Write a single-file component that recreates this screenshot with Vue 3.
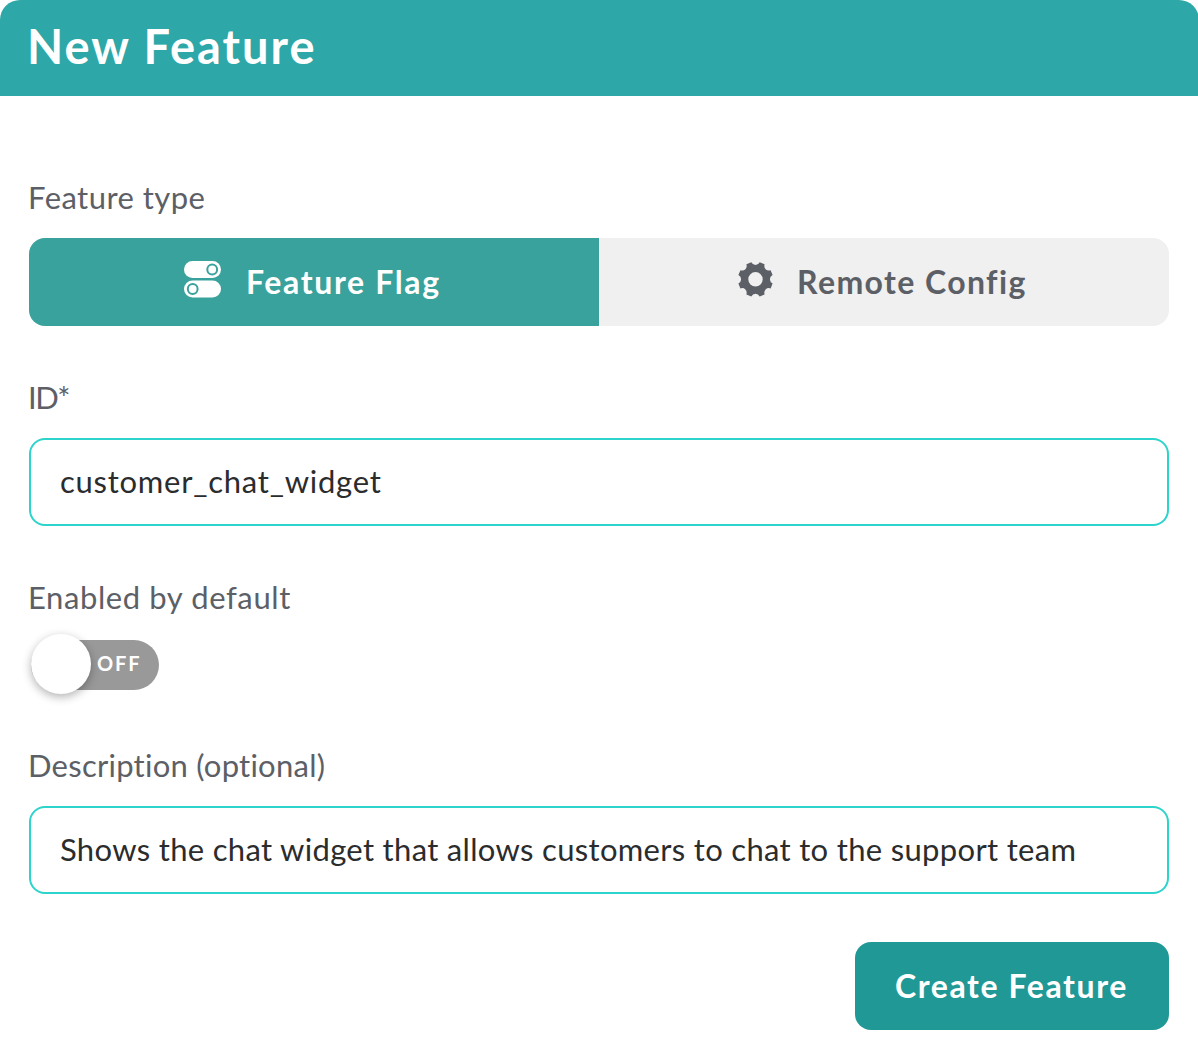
<script setup>
import { ref } from 'vue'

const featureType = ref('flag')
const featureId = ref('customer_chat_widget')
const description = ref('Shows the chat widget that allows customers to chat to the support team')
const enabled = ref(false)
</script>

<template>
  <section class="dialog">
    <header class="head"><h1>New Feature</h1></header>
    <form class="body" @submit.prevent>
      <div class="field">
        <div class="label">Feature type</div>
        <div class="tabs">
          <button type="button" class="tab" :class="{ active: featureType === 'flag' }" @click="featureType = 'flag'">
            <svg class="icon-flag" width="38" height="38" viewBox="0 0 38 38">
              <rect x="1" y="1" width="37" height="17" rx="8.5" fill="currentColor" />
              <circle cx="29.2" cy="9.5" r="4.9" fill="none" stroke="#39a29c" stroke-width="2" />
              <rect x="1" y="20.4" width="37" height="17" rx="8.5" fill="currentColor" />
              <circle cx="9.7" cy="29" r="4.9" fill="none" stroke="#39a29c" stroke-width="2" />
            </svg>
            <span class="t-flag">Feature Flag</span>
          </button>
          <button type="button" class="tab" :class="{ active: featureType === 'config' }" @click="featureType = 'config'">
            <svg class="icon-gear" width="36" height="36" viewBox="-18.5 -18.3 36 36">
              <path
                fill="currentColor"
                fill-rule="evenodd"
                d="M-4.2 -17.1 Q-2.8 -14.4 0 -14.4 Q2.8 -14.4 4.2 -17.1 L9.1 -15.1 Q8.2 -12.1 10.1 -10.1 Q12.1 -8.2 15.1 -9.1 L17.1 -4.2 Q14.4 -2.8 14.4 0 Q14.4 2.8 17.1 4.2 L15.1 9.1 Q12.1 8.2 10.1 10.1 Q8.2 12.1 9.1 15.1 L4.2 17.1 Q2.8 14.4 0 14.4 Q-2.8 14.4 -4.2 17.1 L-9.1 15.1 Q-8.2 12.1 -10.1 10.1 Q-12.1 8.2 -15.1 9.1 L-17.1 4.2 Q-14.4 2.8 -14.4 0 Q-14.4 -2.8 -17.1 -4.2 L-15.1 -9.1 Q-12.1 -8.2 -10.1 -10.1 Q-8.2 -12.1 -9.1 -15.1 Z M7.2 0 A7.2 7.2 0 1 0 -7.2 0 A7.2 7.2 0 1 0 7.2 0 Z"
              />
            </svg>
            <span class="t-config">Remote Config</span>
          </button>
        </div>
      </div>
      <div class="field">
        <div class="label l-id">ID*</div>
        <div class="input v-id">{{ featureId }}</div>
      </div>
      <div class="field">
        <div class="label l-enabled">Enabled by default</div>
        <div class="switch" role="switch" :aria-checked="enabled" @click="enabled = !enabled">
          <span class="track">{{ enabled ? 'ON' : 'OFF' }}</span>
          <span class="knob"></span>
        </div>
      </div>
      <div class="field">
        <div class="label l-desc">Description (optional)</div>
        <div class="input v-desc">{{ description }}</div>
      </div>
      <button type="submit" class="submit">Create Feature</button>
    </form>
  </section>
</template>

<style>
body {
  margin: 0;
  background: #fff;
}
</style>

<style scoped>
.dialog,
.dialog * {
  box-sizing: border-box;
}
.dialog {
  width: 1199px;
  height: 1060px;
  margin-right: -1px;
  overflow: hidden;
  background: #fff;
  font-family: Lato, "Liberation Sans", sans-serif;
  font-size: 31px;
  color: #2b2c2d;
  white-space: nowrap;
}
.head {
  height: 96px;
  padding: 0 29px 4px 27px;
  display: flex;
  align-items: center;
  background: #2da7a7;
  color: #fff;
  border-radius: 20px 20px 0 0;
}
h1 {
  margin: 0;
  font-size: 47px;
  line-height: 56px;
  font-weight: 700;
  letter-spacing: 2px;
}
.body {
  padding: 80px 30px 0 29px;
  display: flex;
  flex-direction: column;
  gap: 50px;
}
.field {
  display: flex;
  flex-direction: column;
  gap: 22px;
}
.label {
  height: 40px;
  line-height: 43px;
  margin-left: -1px;
  color: #5c6066;
  letter-spacing: 0.45px;
}
.l-id {
  letter-spacing: -1.5px;
}
.l-enabled {
  letter-spacing: 0.6px;
}
.l-desc {
  letter-spacing: 0.25px;
}
.tabs {
  height: 88px;
  display: flex;
  border-radius: 16px;
  overflow: hidden;
  background: #f0f0f0;
}
button {
  border: 0;
  margin: 0;
  font-family: inherit;
  font-size: 32px;
  line-height: 38px;
  font-weight: 700;
  letter-spacing: 1.5px;
  cursor: pointer;
}
.tab {
  flex: 1;
  display: flex;
  align-items: center;
  padding: 0;
  background: transparent;
  color: #5c6066;
}
.tab.active {
  background: #39a29c;
  color: #fff;
}
.icon-flag {
  margin: 0 25px 6px 154px;
}
.icon-gear {
  margin: 0 24px 6px 138px;
}
.t-flag,
.t-config {
  padding-bottom: 1px;
}
.t-flag {
  letter-spacing: 1.65px;
}
.t-config {
  letter-spacing: 1.4px;
}
.input {
  height: 88px;
  padding: 0 29px 3px;
  display: flex;
  align-items: center;
  border: 2px solid #2dd4cb;
  border-radius: 16px;
}
.v-id {
  letter-spacing: 0.75px;
}
.v-desc {
  letter-spacing: 0.32px;
}
.switch {
  position: relative;
  width: 130px;
  height: 60px;
  margin: -4px 0 0;
  padding-top: 6px;
  cursor: pointer;
}
.track {
  display: block;
  width: 128px;
  height: 50px;
  margin-left: 2px;
  padding-left: 66px;
  border-radius: 25px;
  background: #999;
  color: #fff;
  font-size: 20px;
  font-weight: 700;
  line-height: 47px;
  letter-spacing: 1.9px;
}
.knob {
  position: absolute;
  top: 0;
  left: 2px;
  width: 60px;
  height: 60px;
  border-radius: 50%;
  background: #fff;
  box-shadow: 0 3px 10px rgba(0, 0, 0, 0.3);
}
.submit {
  align-self: flex-end;
  width: 314px;
  height: 88px;
  margin-top: -2px;
  padding: 0 0 1px 40px;
  text-align: left;
  letter-spacing: 1.6px;
  border-radius: 16px;
  background: #209996;
  color: #fff;
}
</style>
